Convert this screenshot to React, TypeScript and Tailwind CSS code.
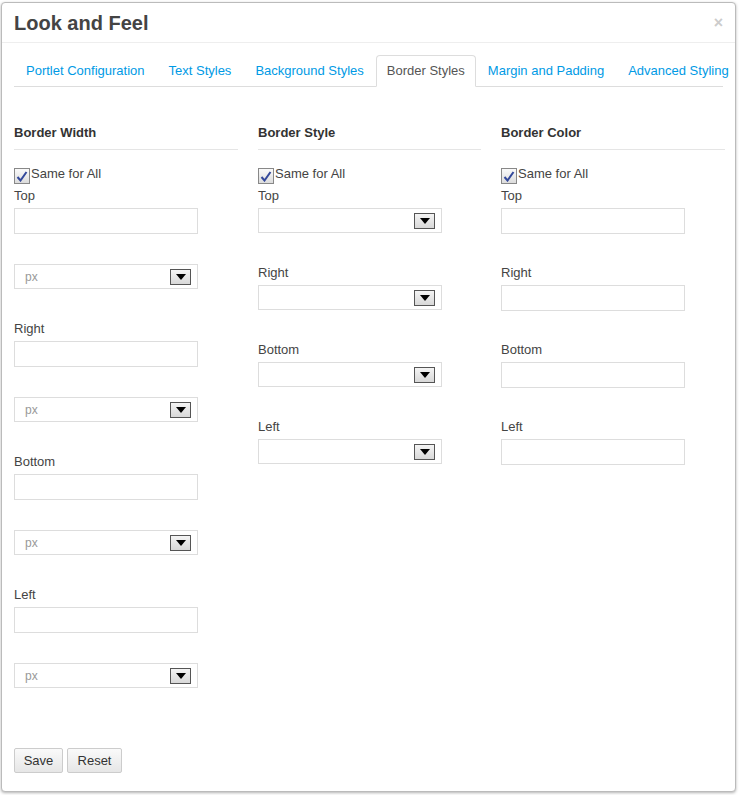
const font = { fontFamily: '"Liberation Sans", Arial, sans-serif' };

const tabs = [
  "Portlet Configuration",
  "Text Styles",
  "Background Styles",
  "Border Styles",
  "Margin and Padding",
  "Advanced Styling",
];

function Arrow() {
  return (
    <span className="flex h-[16px] w-[21px] items-center justify-center border border-[#555] bg-gradient-to-b from-[#f4f4f4] to-[#d8d8d8]">
      <svg width="10" height="6" viewBox="0 0 10 6">
        <path d="M0 0h10L5 6z" fill="#000" />
      </svg>
    </span>
  );
}

function Select({ value = "" }: { value?: string }) {
  return (
    <div className="flex h-[25px] w-[184px] items-center justify-between border border-[#ddd] bg-white pl-[10px] pr-[6px] text-[12px] text-[#999]">
      <span>{value}</span>
      <Arrow />
    </div>
  );
}

function Input() {
  return <div className="h-[26px] w-[184px] border border-[#ddd] bg-white" />;
}

function Label({ children }: { children: string }) {
  return <div className="h-[13px] text-[13px] leading-[13px] text-[#444]">{children}</div>;
}

function SameForAll() {
  return (
    <div className="flex items-center h-[20px] mt-[14px]">
      <span className="mt-[4px] flex h-[16px] w-[16px] items-center justify-center border border-[#888] bg-gradient-to-b from-[#fafafa] to-[#dcdcdc]">
        <svg width="12" height="11" viewBox="0 0 12 11">
          <path d="M1.5 6l3 3.5L10.5 1" stroke="#33489a" strokeWidth="2" fill="none" />
        </svg>
      </span>
      <span className="text-[13px] text-[#444] ml-[1px]">Same for All</span>
    </div>
  );
}

function Heading({ children }: { children: string }) {
  return (
    <div className="h-[38px] border-b border-[#e5e5e5] pt-[11px] text-[13px] font-bold text-[#333]">
      {children}
    </div>
  );
}

export default function App() {
  const sides = ["Top", "Right", "Bottom", "Left"];
  return (
    <div style={font} className="h-[795px] w-[739px] bg-white pl-[1px] pt-[2px]">
      <div className="relative h-[790px] w-[735px] rounded-[4px] border border-[#bbb] bg-white shadow-[0_1px_3px_rgba(0,0,0,0.3)]">
        <div className="flex h-[40px] items-center border-b border-[#eee] px-[12px]">
          <h1 className="text-[20px] font-bold text-[#444]">Look and Feel</h1>
          <span className="absolute right-[12px] top-[8px] text-[16px] font-bold text-[#ccc]">×</span>
        </div>
        <div className="mx-[12px] mt-[12px] flex h-[32px] whitespace-nowrap border-b border-[#ddd] text-[13px]">
          {tabs.map((t) =>
            t === "Border Styles" ? (
              <div key={t} className="-mb-px flex items-center rounded-t-[4px] border border-b-white border-[#ddd] bg-white px-[10px] text-[#555]">
                {t}
              </div>
            ) : (
              <div key={t} className="flex items-center px-[12px] text-[#009ae5]">
                {t}
              </div>
            ),
          )}
        </div>
        <div className="mx-[12px] mt-[25px] grid grid-cols-[224px_223px_224px] gap-x-[20px]">
          <div>
            <Heading>Border Width</Heading>
            <SameForAll />
            {sides.map((s, i) => (
              <div key={s} className={i ? "mt-[33px]" : "mt-[5px]"}>
                <Label>{s}</Label>
                <div className="mt-[6px]">
                  <Input />
                </div>
                <div className="mt-[30px]">
                  <Select value="px" />
                </div>
              </div>
            ))}
          </div>
          <div>
            <Heading>Border Style</Heading>
            <SameForAll />
            {sides.map((s, i) => (
              <div key={s} className={i ? "mt-[33px]" : "mt-[5px]"}>
                <Label>{s}</Label>
                <div className="mt-[6px]">
                  <Select />
                </div>
              </div>
            ))}
          </div>
          <div>
            <Heading>Border Color</Heading>
            <SameForAll />
            {sides.map((s, i) => (
              <div key={s} className={i ? "mt-[32px]" : "mt-[5px]"}>
                <Label>{s}</Label>
                <div className="mt-[6px]">
                  <Input />
                </div>
              </div>
            ))}
          </div>
        </div>
        <div className="absolute bottom-[18px] left-[12px] flex gap-[4px]">
          <button className="h-[25px] w-[49px] rounded-[2px] border border-[#ccc] bg-gradient-to-b from-[#fafafa] to-[#e6e6e6] text-[13px] text-[#333]">
            Save
          </button>
          <button className="h-[25px] w-[55px] rounded-[2px] border border-[#ccc] bg-gradient-to-b from-[#fafafa] to-[#e6e6e6] text-[13px] text-[#333]">
            Reset
          </button>
        </div>
      </div>
    </div>
  );
}
